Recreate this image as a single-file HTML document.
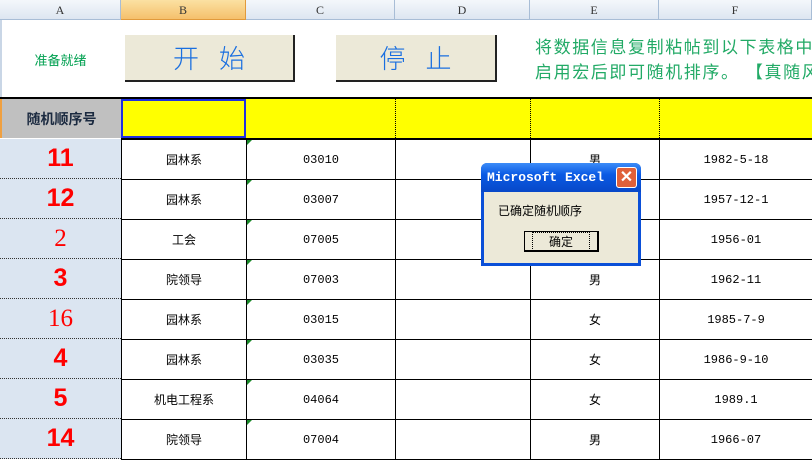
<!DOCTYPE html>
<html><head><meta charset="utf-8"><style>
body{margin:0;width:812px;height:455px;overflow:hidden;background:#fff;position:relative;font-family:"Liberation Sans","Noto Sans CJK SC",sans-serif}
.a{position:absolute;box-sizing:border-box}
.hd{top:0;height:20px;background:linear-gradient(#f4f7fb,#dde6f1);border-right:1px solid #a8bdd6;border-bottom:1px solid #a8bdd6;font-family:"Liberation Serif",serif;font-size:12px;color:#333;text-align:center;line-height:20px}
.c{display:flex;align-items:center;justify-content:center;font-size:12px;color:#000}
.n{color:#f00;font-weight:bold;font-size:25px;font-family:"Liberation Sans",sans-serif}
.btn{background:#ece9d8;border-right:2px solid #222;border-bottom:2px solid #222;font-size:26px;color:#1a6fe0;letter-spacing:20px;padding-left:20px;display:flex;align-items:center;justify-content:center;font-family:"Liberation Sans","Noto Sans CJK SC",sans-serif;font-weight:300}
</style></head><body>
<div class="a hd" style="left:0;width:121px">A</div>
<div class="a hd" style="left:121px;width:125px;background:linear-gradient(#fbe1a2,#f5c06c);border-color:#e19a3c">B</div>
<div class="a hd" style="left:246px;width:149px">C</div>
<div class="a hd" style="left:395px;width:135px">D</div>
<div class="a hd" style="left:530px;width:129px">E</div>
<div class="a hd" style="left:659px;width:153px">F</div>
<div class="a" style="left:0;top:20px;width:2px;height:78px;background:#c9d6e6"></div>
<div class="a c" style="left:0;top:20px;width:121px;height:78px;color:#00a050;font-size:13px">准备就绪</div>
<div class="a btn" style="left:125px;top:35px;width:170px;height:47px">开始</div>
<div class="a btn" style="left:336px;top:35px;width:161px;height:47px">停止</div>
<div class="a" style="left:535px;top:35px;width:300px;font-size:17px;line-height:25px;color:#22aa66;white-space:nowrap;letter-spacing:1.6px">将数据信息复制粘帖到以下表格中<br>启用宏后即可随机排序。 【真随风</div>
<div class="a" style="left:0;top:97px;width:812px;height:2px;background:#000"></div>
<div class="a c" style="left:0;top:99px;width:121px;height:39px;background:#c0c0c0;font-weight:bold;font-size:14px;color:#1b2a40;border-left:2px solid #f0a040">随机顺序号</div>
<div class="a" style="left:121px;top:99px;width:691px;height:39px;background:#ff0"></div>
<div class="a" style="left:121px;top:99px;width:125px;height:39px;border:2px solid #2030e0"></div>
<div class="a" style="left:395px;top:99px;width:1px;height:39px;border-left:1px dotted #000"></div>
<div class="a" style="left:530px;top:99px;width:1px;height:39px;border-left:1px dotted #000"></div>
<div class="a" style="left:659px;top:99px;width:1px;height:39px;border-left:1px dotted #000"></div>
<div class="a" style="left:121px;top:138px;width:691px;height:1px;background:#000"></div>
<div id="rows"></div>
<script>
var d=[["11","园林系","03010","男","1982-5-18"],["12","园林系","03007","","1957-12-1"],["2","工会","07005","","1956-01"],["3","院领导","07003","男","1962-11"],["16","园林系","03015","女","1985-7-9"],["4","园林系","03035","女","1986-9-10"],["5","机电工程系","04064","女","1989.1"],["14","院领导","07004","男","1966-07"]];
var h="";d.forEach(function(r,i){var t=139+i*40;
h+='<div class="a c n" style="left:0;top:'+t+'px;width:121px;height:40px;background:#dbe5f1;border-bottom:1px dotted #333;'+(i==2||i==4?'font-family:Liberation Serif,serif;font-weight:normal':'')+'">'+r[0]+'</div>';
var xs=[121,246,395,530,659,812],v=[r[1],r[2],"",r[3],r[4]];
for(var j=0;j<5;j++)h+='<div class="a c" style="left:'+xs[j]+'px;top:'+t+'px;width:'+(xs[j+1]-xs[j]+1)+'px;height:41px;border:1px solid #000;'+(j>0?'font-family:Liberation Mono,monospace':'')+'">'+v[j]+'</div>';
h+='<div class="a" style="left:247px;top:'+(t+1)+'px;width:0;height:0;border-top:5px solid #1a8a2a;border-right:5px solid transparent"></div>';});
document.getElementById("rows").innerHTML=h;
</script>
<div class="a" style="left:481px;top:163px;width:160px;height:103px;background:#0a4fd8;border-radius:6px 6px 0 0"></div>
<div class="a" style="left:481px;top:163px;width:160px;height:29px;background:linear-gradient(#3c8cf8,#0a5ae4 40%,#0848c8);border-radius:6px 6px 0 0"></div>
<div class="a" style="left:487px;top:170px;color:#fff;font-weight:bold;font-size:13px;font-family:'Liberation Mono',monospace">Microsoft Excel</div>
<div class="a" style="left:616px;top:167px;width:21px;height:21px;background:#e0603a;border:1px solid #fff;border-radius:3px;color:#fff;font-size:16px;text-align:center;line-height:19px;font-weight:bold">✕</div>
<div class="a" style="left:484px;top:192px;width:154px;height:71px;background:#ece9d8"></div>
<div class="a" style="left:498px;top:202px;font-size:12px">已确定随机顺序</div>
<div class="a c" style="left:524px;top:231px;width:75px;height:21px;background:#ece9d8;border:1px solid #000;border-right:2px solid #000;border-bottom:2px solid #000"><span style="border:1px dotted #000;padding:0 16px;font-size:12px">确定</span></div>
</body></html>
